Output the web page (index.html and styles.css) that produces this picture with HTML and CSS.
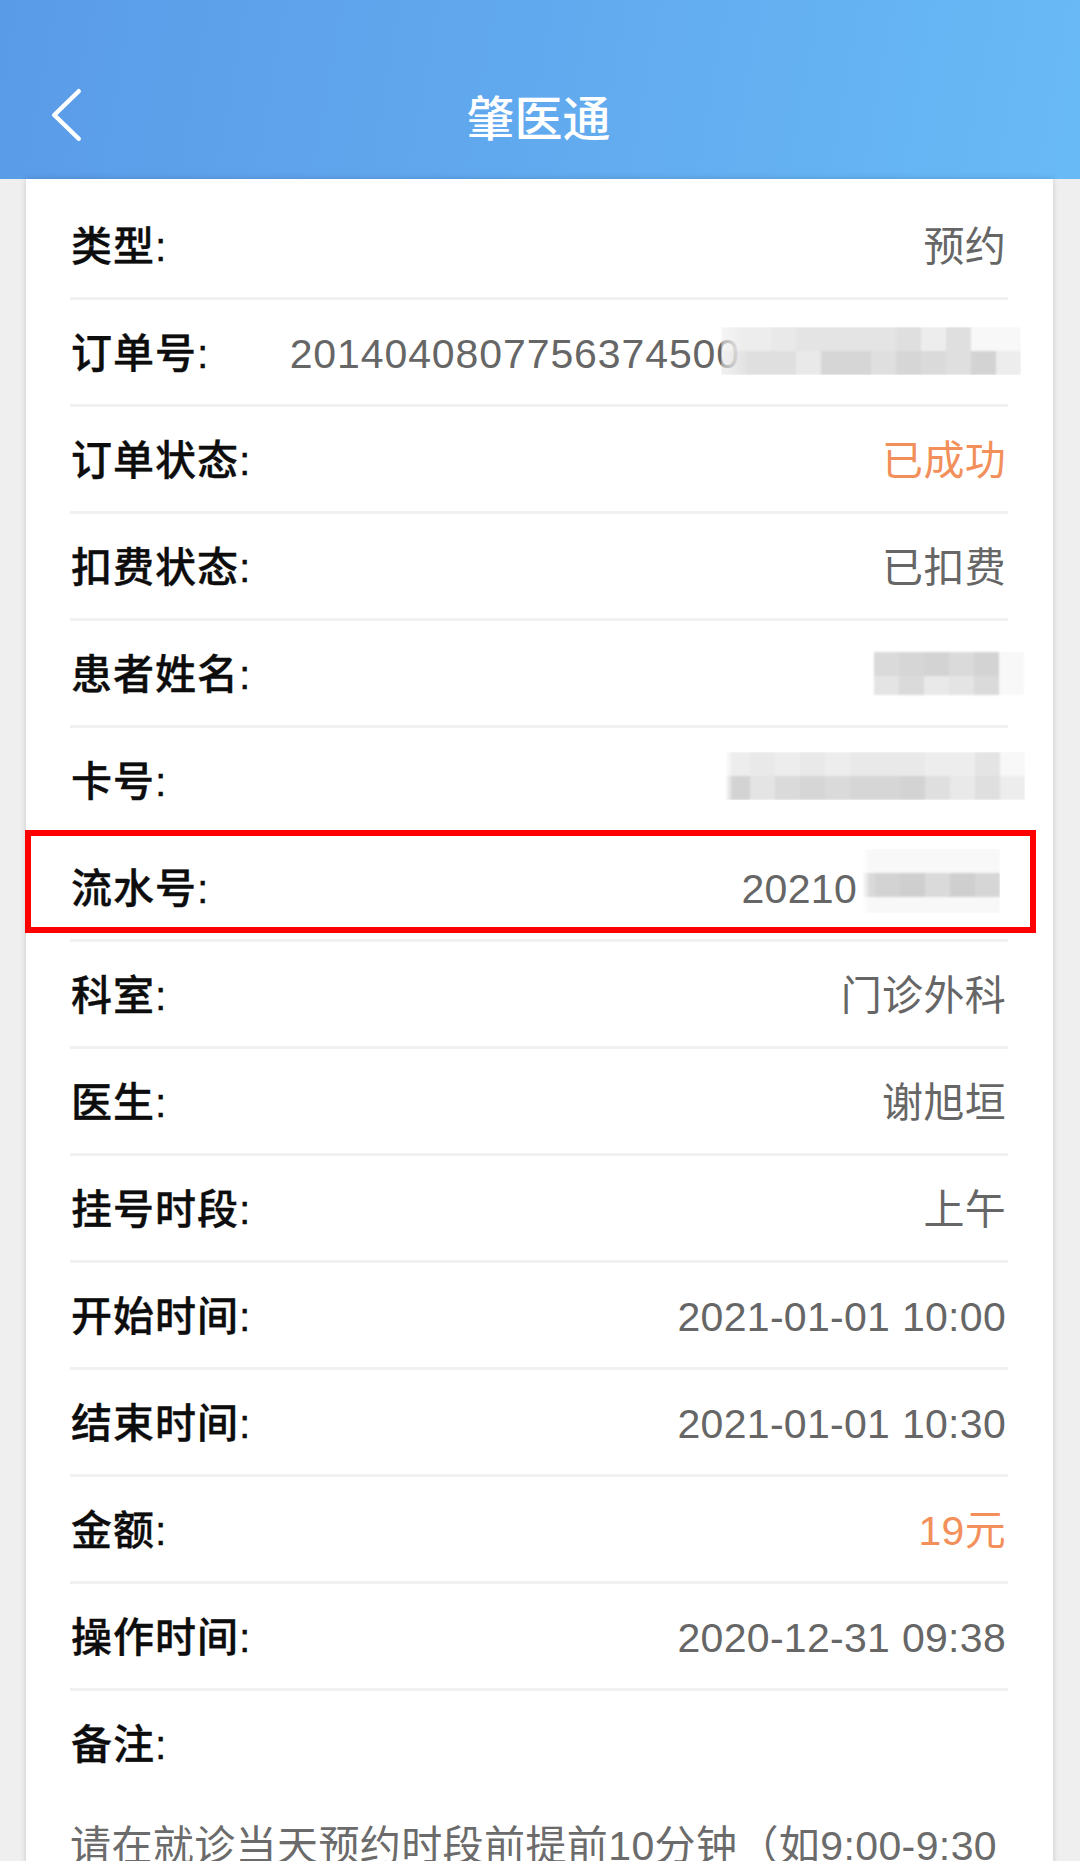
FILE: index.html
```html
<!DOCTYPE html>
<html lang="zh-CN">
<head>
<meta charset="utf-8">
<title>肇医通</title>
<link rel="stylesheet" href="styles.css">
</head>
<body>
<div class="app">
  <header class="topbar">
    <div class="statusbar"></div>
    <div class="navbar">
      <svg class="back" width="36" height="58" viewBox="0 0 36 58" aria-label="返回">
        <polyline points="29.75,5.25 5.25,29 29.75,52.75" fill="none" stroke="#ffffff" stroke-width="4.5" stroke-linecap="round" stroke-linejoin="round"/>
      </svg>
      <h1 class="title">肇医通</h1>
      <span class="nav-spacer"></span>
    </div>
  </header>

  <main class="card">
    <div class="row"><span class="label">类型:</span><span class="value">预约</span></div>

    <div class="row">
      <span class="label">订单号:</span>
      <span class="value masked masked-order">
        <span class="num num-order">2014040807756374500</span>
        <span class="mosaic mosaic-order">
          <i class="c1"></i><i class="c1"></i><i class="c2"></i><i class="c3"></i><i class="c3"></i><i class="c3"></i><i class="c3"></i><i class="c4"></i><i class="c1"></i><i class="c4"></i><i class="c0"></i><i class="c0"></i>
          <i class="c3"></i><i class="c4"></i><i class="c4"></i><i class="c2"></i><i class="c6"></i><i class="c6"></i><i class="c4"></i><i class="c6"></i><i class="c5"></i><i class="c4"></i><i class="c7"></i><i class="c1"></i>
        </span>
      </span>
    </div>

    <div class="row"><span class="label">订单状态:</span><span class="value orange">已成功</span></div>
    <div class="row"><span class="label">扣费状态:</span><span class="value">已扣费</span></div>

    <div class="row">
      <span class="label">患者姓名:</span>
      <span class="value masked masked-name">
        <span class="mosaic mosaic-name">
          <i class="c5"></i><i class="c6"></i><i class="c7"></i><i class="c5"></i><i class="c7"></i><i class="c0"></i>
          <i class="c3"></i><i class="c5"></i><i class="c2"></i><i class="c3"></i><i class="c5"></i><i class="c0"></i>
        </span>
      </span>
    </div>

    <div class="row">
      <span class="label">卡号:</span>
      <span class="value masked masked-card">
        <span class="mosaic mosaic-card">
          <i class="c1"></i><i class="c2"></i><i class="c1"></i><i class="c2"></i><i class="c1"></i><i class="c2"></i><i class="c2"></i><i class="c2"></i><i class="c1"></i><i class="c1"></i><i class="c3"></i><i class="c0"></i>
          <i class="c7"></i><i class="c3"></i><i class="c5"></i><i class="c6"></i><i class="c5"></i><i class="c6"></i><i class="c6"></i><i class="c7"></i><i class="c4"></i><i class="c2"></i><i class="c4"></i><i class="c1"></i>
        </span>
      </span>
    </div>

    <div class="row row-highlight">
      <span class="label">流水号:</span>
      <span class="value masked masked-serial">
        <span class="num">20210</span>
        <span class="mosaic mosaic-serial">
          <i class="c0"></i><i class="c0"></i><i class="c0"></i><i class="c0"></i><i class="c0"></i><i class="c0"></i>
          <i class="c5"></i><i class="c7"></i><i class="c8"></i><i class="c5"></i><i class="c8"></i><i class="c6"></i>
          <i class="c0"></i><i class="c0"></i><i class="c0"></i><i class="c0"></i><i class="c0"></i><i class="c0"></i>
        </span>
      </span>
      <span class="highlight-box"></span>
    </div>

    <div class="row"><span class="label">科室:</span><span class="value">门诊外科</span></div>
    <div class="row"><span class="label">医生:</span><span class="value">谢旭垣</span></div>
    <div class="row"><span class="label">挂号时段:</span><span class="value">上午</span></div>
    <div class="row"><span class="label">开始时间:</span><span class="value">2021-01-01 10:00</span></div>
    <div class="row"><span class="label">结束时间:</span><span class="value">2021-01-01 10:30</span></div>
    <div class="row"><span class="label">金额:</span><span class="value orange">19元</span></div>
    <div class="row"><span class="label">操作时间:</span><span class="value">2020-12-31 09:38</span></div>
    <div class="row row-last"><span class="label">备注:</span></div>

    <p class="note">请在就诊当天预约时段前提前10分钟（如9:00-9:30</p>
  </main>
</div>
</body>
</html>
```

FILE: styles.css
```css
html, body {
  margin: 0;
  padding: 0;
  height: 100%;
  overflow: hidden;
}

body {
  background: #efefef;
  font-family: "Liberation Sans", "Noto Sans CJK SC", sans-serif;
}

.app {
  width: 1080px;
  height: 1861px;
  overflow: hidden;
}

/* ---------- top bar ---------- */
.topbar {
  height: 179px;
  background: linear-gradient(100deg, #5a9be8 0%, #62abef 55%, #68baf6 100%);
  display: flex;
  flex-direction: column;
}

.statusbar {
  height: 51px;
}

.navbar {
  height: 128px;
  display: grid;
  grid-template-columns: 1fr auto 1fr;
  align-items: center;
  padding-left: 49px;
}

.back {
  display: block;
}

.title {
  margin: 0;
  color: #ffffff;
  font-family: "Noto Sans CJK SC", sans-serif;
  font-size: 48px;
  font-weight: 500;
  line-height: 60px;
  position: relative;
  left: -26px;
}

/* ---------- card ---------- */
.card {
  margin: 0 27px 0 26px;
  background: #ffffff;
  box-shadow: 0 0 6px rgba(0, 0, 0, 0.16);
  padding: 14px 45px 0 44px;
  min-height: 1700px;
}

.row {
  position: relative;
  height: 100px;
  padding-top: 4px;
  display: flex;
  align-items: center;
  justify-content: space-between;
  border-bottom: 3px solid #f1f1f1;
}

.row-last {
  border-bottom: none;
}

.label {
  font-size: 41px;
  line-height: 60px;
  color: #0d0d0d;
  font-weight: 500;
  -webkit-text-stroke: 0.35px #0d0d0d;
  letter-spacing: 1px;
  white-space: nowrap;
  padding-left: 1px;
}

.value {
  font-size: 41px;
  line-height: 60px;
  color: #666666;
  letter-spacing: 0.3px;
  white-space: nowrap;
  padding-right: 2px;
}

.orange {
  color: #f28f5a;
}

/* ---------- masked values ---------- */
.masked {
  display: inline-flex;
  align-items: center;
}

.num-order {
  letter-spacing: 0.9px;
}

.mosaic {
  display: grid;
  grid-template-columns: repeat(var(--cols), 25px);
  grid-auto-rows: 24px;
  filter: blur(1px);
}

.mosaic i {
  display: block;
}

.mosaic-order {
  --cols: 12;
  margin-left: -19px;
  margin-right: -15px;
  margin-top: -6px;
  -webkit-mask-image: linear-gradient(to right, rgba(0,0,0,0.55) 0, #000 22px);
  mask-image: linear-gradient(to right, rgba(0,0,0,0.55) 0, #000 22px);
}

.mosaic-name {
  --cols: 6;
  grid-template-rows: 24px 19px;
  margin-right: -18px;
  margin-top: -4px;
}

.mosaic-card {
  --cols: 12;
  margin-right: -19px;
  margin-top: -12px;
  -webkit-mask-image: linear-gradient(to right, transparent 0, #000 8px);
  mask-image: linear-gradient(to right, transparent 0, #000 8px);
}

.mosaic-serial {
  grid-template-columns: 13px repeat(5, 25px);
  grid-template-rows: 24px 24px 16px;
  margin-left: 5px;
  margin-right: 6px;
  margin-top: -16px;
  -webkit-mask-image: linear-gradient(to right, transparent 0, #000 8px);
  mask-image: linear-gradient(to right, transparent 0, #000 8px);
}

.c0 { background: #f8f8f8; }
.c1 { background: #ededed; }
.c2 { background: #e9e9e9; }
.c3 { background: #e4e4e4; }
.c4 { background: #dfdfdf; }
.c5 { background: #dadada; }
.c6 { background: #d6d6d6; }
.c7 { background: #d3d3d3; }
.c8 { background: #cfcfcf; }

/* ---------- highlight annotation ---------- */
.highlight-box {
  position: absolute;
  top: -5px;
  left: -45px;
  right: -28px;
  height: 103px;
  box-sizing: border-box;
  border: 6px solid #ff0000;
  pointer-events: none;
}

/* ---------- note ---------- */
.note {
  margin: 0;
  padding-top: 21px;
  font-size: 41px;
  line-height: 60px;
  color: #6b6b6b;
  letter-spacing: 0.4px;
  white-space: nowrap;
}
```
